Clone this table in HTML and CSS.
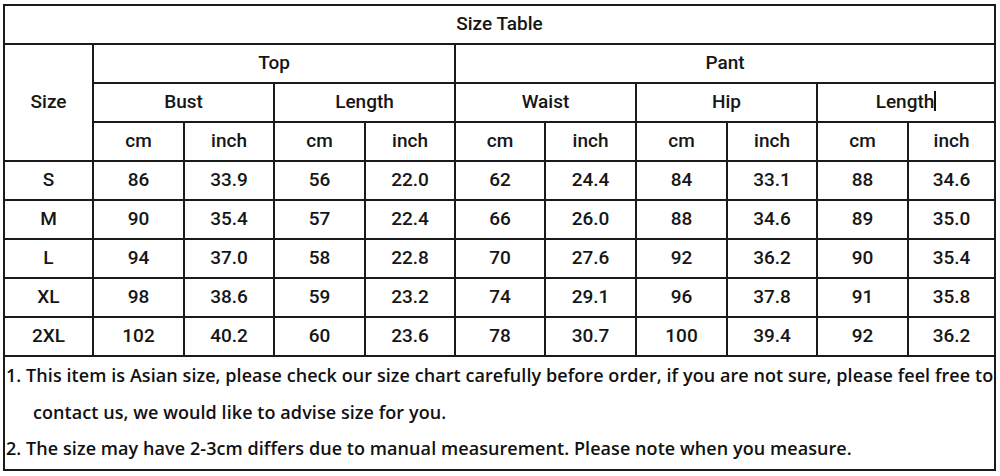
FILE: index.html
```html
<!DOCTYPE html>
<html>
<head>
<meta charset="utf-8">
<link rel="stylesheet" href="styles.css">
</head>
<body>
<div class="sheet">
  <div class="cell title">Size Table</div>
  <div class="cell size">Size</div>
  <div class="cell top">Top</div>
  <div class="cell pant">Pant</div>
  <div class="cell span2">Bust</div>
  <div class="cell span2">Length</div>
  <div class="cell span2">Waist</div>
  <div class="cell span2">Hip</div>
  <div class="cell span2">Length<span class="caret"></span></div>
  <div class="cell">cm</div><div class="cell">inch</div>
  <div class="cell">cm</div><div class="cell">inch</div>
  <div class="cell">cm</div><div class="cell">inch</div>
  <div class="cell">cm</div><div class="cell">inch</div>
  <div class="cell">cm</div><div class="cell">inch</div>

  <div class="cell">S</div><div class="cell">86</div><div class="cell">33.9</div><div class="cell">56</div><div class="cell">22.0</div><div class="cell">62</div><div class="cell">24.4</div><div class="cell">84</div><div class="cell">33.1</div><div class="cell">88</div><div class="cell">34.6</div>
  <div class="cell">M</div><div class="cell">90</div><div class="cell">35.4</div><div class="cell">57</div><div class="cell">22.4</div><div class="cell">66</div><div class="cell">26.0</div><div class="cell">88</div><div class="cell">34.6</div><div class="cell">89</div><div class="cell">35.0</div>
  <div class="cell">L</div><div class="cell">94</div><div class="cell">37.0</div><div class="cell">58</div><div class="cell">22.8</div><div class="cell">70</div><div class="cell">27.6</div><div class="cell">92</div><div class="cell">36.2</div><div class="cell">90</div><div class="cell">35.4</div>
  <div class="cell">XL</div><div class="cell">98</div><div class="cell">38.6</div><div class="cell">59</div><div class="cell">23.2</div><div class="cell">74</div><div class="cell">29.1</div><div class="cell">96</div><div class="cell">37.8</div><div class="cell">91</div><div class="cell">35.8</div>
  <div class="cell">2XL</div><div class="cell">102</div><div class="cell">40.2</div><div class="cell">60</div><div class="cell">23.6</div><div class="cell">78</div><div class="cell">30.7</div><div class="cell">100</div><div class="cell">39.4</div><div class="cell">92</div><div class="cell">36.2</div>

  <div class="notes">
    <p class="note">1. This item is Asian size, please check our size chart carefully before order, if you are not sure, please feel free to</p>
    <p class="note indent">contact us, we would like to advise size for you.</p>
    <p class="note">2. The size may have 2-3cm differs due to manual measurement. Please note when you measure.</p>
  </div>
</div>
</body>
</html>
```

FILE: styles.css
```css
html, body {
  margin: 0;
  padding: 0;
  background: #ffffff;
}

body {
  padding: 4px 0 0 3px;
}

.sheet {
  display: grid;
  grid-template-columns: 87px 89px 88px 89px 88px 88px 89px 89px 88px 89px 85px;
  grid-template-rows: repeat(9, 37px) 112px;
  gap: 2px;
  padding: 2px;
  width: max-content;
  background: #1a1a1a;
  font-family: Roboto, "Liberation Sans", sans-serif;
  font-weight: 500;
  font-size: 19px;
  color: #161616;
}

.cell {
  background: #ffffff;
  display: flex;
  align-items: center;
  justify-content: center;
  padding-bottom: 3px;
  box-sizing: border-box;
}

.title {
  grid-column: 1 / -1;
}

.size {
  grid-row: 2 / span 3;
}

.top {
  grid-column: 2 / span 4;
}

.pant {
  grid-column: 6 / span 6;
}

.span2 {
  grid-column: span 2;
}

.caret {
  display: inline-block;
  width: 2px;
  height: 20px;
  background: #111;
  margin-left: 0;
}

.notes {
  grid-column: 1 / -1;
  background: #ffffff;
  padding: 0 0 0 1px;
  font-family: "Open Sans", "Liberation Sans", sans-serif;
  font-weight: 600;
  font-size: 18px;
  letter-spacing: 0.07px;
  color: #111111;
}

.note {
  margin: 0;
  line-height: 36.5px;
  white-space: nowrap;
}

.indent {
  padding-left: 27px;
}
```
